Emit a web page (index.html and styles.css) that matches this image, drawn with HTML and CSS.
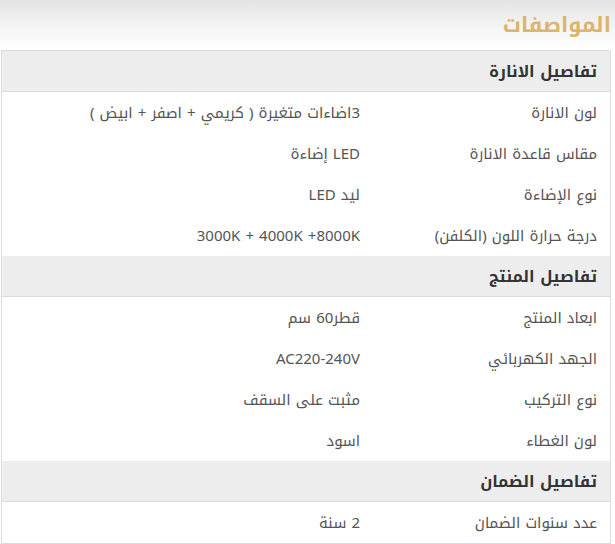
FILE: index.html
```html
<!DOCTYPE html>
<html lang="ar" dir="rtl">
<head>
<meta charset="utf-8">
<link rel="stylesheet" href="styles.css">
</head>
<body>
<div class="page">
  <div class="title-band"><h2 class="title">المواصفات</h2></div>
  <div class="specs">
    <div class="section">تفاصيل الانارة</div>
    <div class="row"><div class="label">لون الانارة</div><div class="value">3اضاءات متغيرة ( كريمي + اصفر + ابيض )</div></div>
    <div class="row"><div class="label">مقاس قاعدة الانارة</div><div class="value">LED إضاءة</div></div>
    <div class="row"><div class="label">نوع الإضاءة</div><div class="value">ليد LED</div></div>
    <div class="row"><div class="label">درجة حرارة اللون (الكلفن)</div><div class="value">3000K + 4000K +8000K</div></div>
    <div class="section">تفاصيل المنتج</div>
    <div class="row"><div class="label">ابعاد المنتج</div><div class="value">قطر60 سم</div></div>
    <div class="row"><div class="label">الجهد الكهربائي</div><div class="value">AC220-240V</div></div>
    <div class="row"><div class="label">نوع التركيب</div><div class="value">مثبت على السقف</div></div>
    <div class="row"><div class="label">لون الغطاء</div><div class="value">اسود</div></div>
    <div class="section">تفاصيل الضمان</div>
    <div class="row"><div class="label">عدد سنوات الضمان</div><div class="value">2 سنة</div></div>
  </div>
</div>
</body>
</html>
```

FILE: styles.css
```css
* { box-sizing: border-box; }
html, body { margin: 0; padding: 0; background: #fff; }
body {
  font-family: "Noto Kufi Arabic", "Droid Arabic Kufi", "Noto Sans Arabic", "Open Sans", "DejaVu Sans", sans-serif;
  color: #555;
}
.page { width: 615px; }
.title-band {
  height: 50px;
  background: linear-gradient(to bottom, #e3e3e3 0%, #f6f6f6 60%, #ffffff 100%);
  display: flex;
  align-items: center;
  padding-right: 4px;
}
.title {
  margin: 0;
  font-size: 21px;
  font-weight: bold;
  color: #deb36a;
  line-height: 1;
}
.specs {
  margin-right: 4px;
  width: 610px;
  border: 1px solid #dcdcdc;
}
.section {
  height: 41px;
  background: #ededed;
  border-bottom: 1px solid #dcdcdc;
  display: flex;
  align-items: center;
  padding-right: 13px;
  font-size: 16px;
  font-weight: bold;
  color: #333;
}
.row {
  height: 41px;
  display: flex;
  align-items: center;
  font-size: 15px;
  color: #555;
}
.label {
  width: 250px;
  padding-right: 13px;
}
.value {
  flex: 1;
}
```
